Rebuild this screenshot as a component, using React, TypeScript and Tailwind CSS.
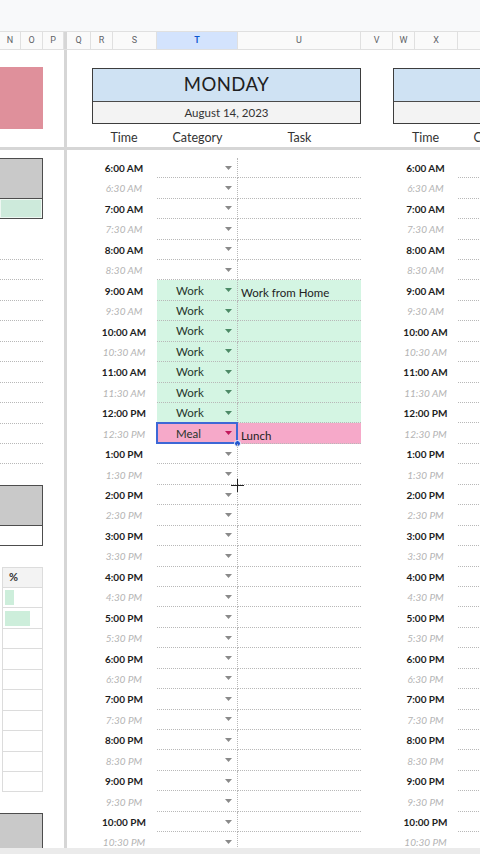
import React from "react";

type Slot = { label: string; full: boolean };

const slots: Slot[] = (() => {
  const out: Slot[] = [];
  for (let h = 6; h <= 22; h++) {
    const h12 = h % 12 === 0 ? 12 : h % 12;
    const ap = h < 12 ? "AM" : "PM";
    out.push({ label: `${h12}:00 ${ap}`, full: true });
    out.push({ label: `${h12}:30 ${ap}`, full: false });
  }
  return out;
})();

type Entry = { cat: string; task?: string; tone: "work" | "meal" };

const entries: Record<number, Entry> = {
  6: { cat: "Work", task: "Work from Home", tone: "work" },
  7: { cat: "Work", tone: "work" },
  8: { cat: "Work", tone: "work" },
  9: { cat: "Work", tone: "work" },
  10: { cat: "Work", tone: "work" },
  11: { cat: "Work", tone: "work" },
  12: { cat: "Work", tone: "work" },
  13: { cat: "Meal", task: "Lunch", tone: "meal" },
};

// [label, width, kind]
const columns: [string, string, "col" | "freeze"][] = [
  ["N", "w-[21px]", "col"],
  ["O", "w-[22px]", "col"],
  ["P", "w-[21px]", "col"],
  ["", "w-[3px]", "freeze"],
  ["Q", "w-[24px]", "col"],
  ["R", "w-[22px]", "col"],
  ["S", "w-[44px]", "col"],
  ["T", "w-[81px]", "col"],
  ["U", "w-[123px]", "col"],
  ["V", "w-[32px]", "col"],
  ["W", "w-[22px]", "col"],
  ["X", "w-[43px]", "col"],
  ["", "w-[81px]", "col"],
];

function Caret({ color }: { color: string }) {
  return (
    <svg width="7" height="4" viewBox="0 0 7 4" className="absolute right-[5px] top-1/2 -translate-y-1/2">
      <polygon points="0,0 7,0 3.5,4" fill={color} />
    </svg>
  );
}

function TimeLabel({ slot }: { slot: Slot }) {
  return slot.full ? (
    <span className="text-[10px] font-bold text-[#1d1d1d] leading-none">{slot.label}</span>
  ) : (
    <span className="text-[10px] italic text-[#b4b4b4] leading-none">{slot.label}</span>
  );
}

function ColumnHeader() {
  return (
    <div className="flex h-[19px] border-y border-[#e0e0e0] bg-[#fafafa]">
      {columns.map(([name, w, kind], i) =>
        kind === "freeze" ? (
          <div key={i} className={`${w} shrink-0 bg-[#d6d6d6]`} />
        ) : (
          <div
            key={i}
            className={`${w} shrink-0 flex items-center justify-center border-r border-[#e0e0e0] text-[9px] font-['Roboto',sans-serif] ${
              name === "T" ? "bg-[#d3e3fd] text-[#0b57d0] font-semibold" : "text-[#5f6368]"
            }`}
          >
            {name}
          </div>
        )
      )}
    </div>
  );
}

function DayBox({ title, date, className }: { title?: string; date?: string; className: string }) {
  return (
    <div className={`${className} h-[56px] flex flex-col border-[1.5px] border-[#3d3d3d]`}>
      <div className="h-[33px] shrink-0 bg-[#cfe2f3] border-b border-[#4a4a4a] flex items-center justify-center text-[18.5px] text-[#202020] tracking-[0.5px]">
        {title}
      </div>
      <div className="flex-1 bg-[#f3f3f3] flex items-center justify-center text-[11.5px] text-[#333]">{date}</div>
    </div>
  );
}

function LeftUpper() {
  return (
    <div className="w-[64px] shrink-0 pt-[17px]">
      <div className="w-[43px] h-[62px] bg-[#df909b]" />
    </div>
  );
}

function SummaryBox({ lower }: { lower: "green" | "white" }) {
  return (
    <div className="w-[43px] h-[61.35px] shrink-0 flex flex-col border border-l-0 border-[#4d4d4d]">
      <div className="h-[40px] shrink-0 bg-[#c9c9c9] border-b border-[#4d4d4d]" />
      {lower === "green" ? (
        <div className="flex-1 bg-[#cdeadb] border border-[#eef7f2]" />
      ) : (
        <div className="flex-1 bg-white" />
      )}
    </div>
  );
}

function Spacer() {
  return <div className="h-[20.45px] shrink-0" />;
}

function LeftLower() {
  const bars = [9, 25, 0, 0, 0, 0, 0, 0, 0, 0];
  return (
    <div className="w-[64px] shrink-0 pt-[7.8px] flex flex-col">
      <SummaryBox lower="green" />
      <Spacer />
      {Array.from({ length: 11 }).map((_, i) => (
        <div key={i} className="w-[43px] h-[20.45px] shrink-0 border-b border-dotted border-[#b8b8b8]" />
      ))}
      <Spacer />
      <SummaryBox lower="white" />
      <Spacer />
      <div className="ml-[2px] w-[41px] shrink-0 flex flex-col border-x border-t border-[#dcdcdc]">
        <div className="h-[20.45px] shrink-0 bg-[#f3f3f3] border-b border-[#dcdcdc] flex items-center pl-[6px] text-[11px] font-bold text-[#333]">
          %
        </div>
        {bars.map((b, i) => (
          <div key={i} className="h-[20.45px] shrink-0 border-b border-[#dcdcdc] flex items-center pl-[2px]">
            {b > 0 && <div className="h-[15px] bg-[#cdeedb]" style={{ width: b }} />}
          </div>
        ))}
      </div>
      <Spacer />
      <div className="w-[43px] h-[60px] shrink-0 border border-l-0 border-b-0 border-[#4d4d4d] bg-[#c9c9c9]" />
    </div>
  );
}

function MainUpper() {
  return (
    <div className="flex-1 flex flex-col pt-[18px]">
      <div className="flex">
        <DayBox className="ml-[25px] w-[269px] shrink-0" title="MONDAY" date="August 14, 2023" />
        <DayBox className="ml-[32px] w-[120px] shrink-0 border-r-0" />
      </div>
      <div className="flex h-[23px] pt-[5px] items-center text-[12.5px] text-[#333]">
        <div className="w-[24px] shrink-0" />
        <div className="w-[66px] shrink-0 text-center">Time</div>
        <div className="w-[81px] shrink-0 text-center">Category</div>
        <div className="w-[123px] shrink-0 text-center">Task</div>
        <div className="w-[32px] shrink-0" />
        <div className="w-[65px] shrink-0 text-center">Time</div>
        <div className="w-[81px] shrink-0 text-center">Category</div>
      </div>
    </div>
  );
}

function MainLower() {
  return (
    <div className="flex-1 pt-[7.8px] flex flex-col">
      {slots.map((slot, i) => {
        const e = entries[i];
        const fill = e ? (e.tone === "work" ? "bg-[#d4f5e3]" : "bg-[#f6a9c9]") : "";
        const caret = e ? (e.tone === "work" ? "#4c8a66" : "#c2185b") : "#8a8a8a";
        const selected = i === 13;
        return (
          <div key={i} className="flex h-[20.45px] shrink-0">
            <div className="w-[24px] shrink-0" />
            <div className="w-[66px] shrink-0 flex items-center justify-center">
              <TimeLabel slot={slot} />
            </div>
            <div
              className={`relative w-[81px] shrink-0 flex items-center pl-[19px] border-r border-b border-dotted border-[#b8b8b8] text-[11.5px] text-[#26352c] ${fill}`}
            >
              {e?.cat}
              <Caret color={caret} />
              {selected && (
                <>
                  <div className="absolute -left-px -top-px -right-px -bottom-px border-2 border-[#3d68d6]" />
                  <div className="absolute -right-[4px] -bottom-[4px] w-[7px] h-[7px] rounded-full bg-[#2456d1] border border-white" />
                </>
              )}
            </div>
            <div
              className={`w-[123px] shrink-0 flex items-center pl-[3px] pt-[4px] border-b border-dotted border-[#b8b8b8] text-[11.5px] text-[#222] ${fill}`}
            >
              {e?.task}
            </div>
            <div className="w-[32px] shrink-0" />
            <div className="w-[65px] shrink-0 flex items-center justify-center">
              <TimeLabel slot={slot} />
            </div>
            <div className="w-[81px] shrink-0 border-b border-dotted border-[#b8b8b8]" />
          </div>
        );
      })}
    </div>
  );
}

export default function App() {
  return (
    <div className="relative w-[480px] h-[854px] overflow-hidden bg-white font-['Lato',sans-serif]">
      <div className="h-[31px] bg-[#f8f9fa]" />
      <ColumnHeader />
      <div className="flex h-[97px] overflow-hidden">
        <LeftUpper />
        <div className="w-[3px] shrink-0 bg-[#d6d6d6]" />
        <MainUpper />
      </div>
      <div className="h-[3px] bg-[#d6d6d6]" />
      <div className="flex h-[698px] overflow-hidden">
        <LeftLower />
        <div className="w-[3px] shrink-0 bg-[#d6d6d6]" />
        <MainLower />
      </div>
      <div className="h-[6px] bg-[#ebebeb]" />
      {/* pointer crosshair */}
      <svg width="13" height="13" viewBox="0 0 13 13" className="absolute left-[231px] top-[479px]">
        <path d="M6.5 0V13M0 6.5H13" stroke="#222" strokeWidth="1" />
      </svg>
    </div>
  );
}
